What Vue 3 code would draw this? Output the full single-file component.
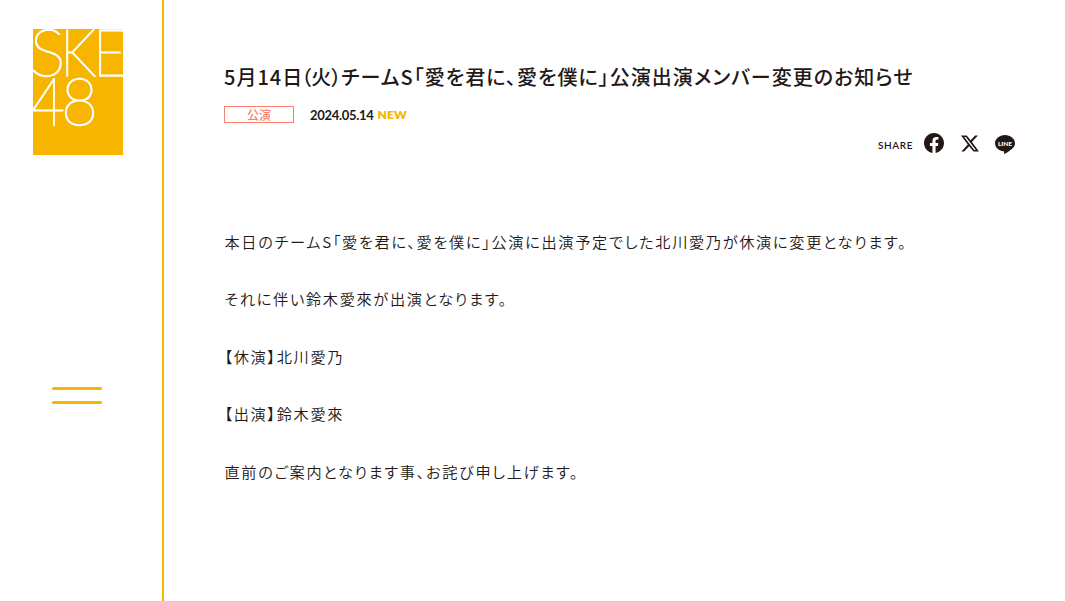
<script setup>
import { ref } from 'vue'

const menuOpen = ref(false)

const news = {
  day: '5月14日',
  weekday: '（火）',
  title: 'チームS「愛を君に、愛を僕に」公演出演メンバー変更のお知らせ',
  category: '公演',
  date: '2024.05.14',
  isNew: true,
  body: [
    '本日のチームS「愛を君に、愛を僕に」公演に出演予定でした北川愛乃が休演に変更となります。',
    'それに伴い鈴木愛來が出演となります。',
    '【休演】北川愛乃',
    '【出演】鈴木愛來',
    '直前のご案内となります事、お詫び申し上げます。',
  ],
}
</script>

<template>
  <div class="page">
    <header class="side">
      <a class="logo" aria-label="SKE48">
        <svg width="90" height="126" viewBox="0 0 90 126">
          <rect width="90" height="126" fill="#f8b500" />
          <g class="logo-text">
            <text x="-3.500" y="47" textLength="36" lengthAdjust="spacingAndGlyphs">S</text>
            <text x="27" y="47" textLength="36" lengthAdjust="spacingAndGlyphs">K</text>
            <text x="60" y="47" textLength="34" lengthAdjust="spacingAndGlyphs">E</text>
            <text x="-2" y="96" textLength="34" lengthAdjust="spacingAndGlyphs">4</text>
            <text x="28" y="96" textLength="37" lengthAdjust="spacingAndGlyphs">8</text>
          </g>
        </svg>
      </a>
      <button class="menu" :aria-expanded="menuOpen" @click="menuOpen = !menuOpen">
        <span></span>
        <span></span>
      </button>
    </header>
    <main class="content">
      <h1>{{ news.day }}<span class="weekday">{{ news.weekday }}</span>{{ news.title }}</h1>
      <div class="meta">
        <span class="category">{{ news.category }}</span>
        <time>{{ news.date }}</time>
        <span v-if="news.isNew" class="new">NEW</span>
      </div>
      <div class="share">
        <span class="share-label">SHARE</span>
        <svg class="facebook" width="20" height="20" viewBox="0 0 24 24">
          <path fill="#231815" d="M24 12.07C24 5.41 18.63 0 12 0S0 5.41 0 12.07C0 18.1 4.39 23.1 10.13 24v-8.44H7.08v-3.49h3.05V9.41c0-3.02 1.79-4.7 4.53-4.7 1.32 0 2.69.24 2.69.24v2.97h-1.52c-1.49 0-1.95.93-1.95 1.88v2.27h3.32l-.53 3.49h-2.79V24C19.61 23.1 24 18.1 24 12.07z" />
        </svg>
        <svg class="x" width="18" height="17" viewBox="0 0 24 24" preserveAspectRatio="none">
          <path fill="#231815" d="M18.9 0.600h3.700l-8.050 9.200L24 23.300h-7.400l-5.800-7.580-6.640 7.580H0.480l8.600-9.830L0 .6h7.590l5.240 6.930zM17.610 21.100h2.040L6.490 2.700H4.300z" />
        </svg>
        <svg class="line" width="20" height="19" viewBox="0 0 20 19">
          <path fill="#231815" d="M10 0C4.500 0 0 3.700 0 8.200c0 4 3.500 7.400 8.300 8.100 1 .2.900.6.700 1.900-.1.600.3.900 1 .6 1.700-.8 6.200-3.700 8.300-6.200 1.100-1.300 1.700-2.700 1.700-4.400C20 3.700 15.500 0 10 0z" />
          <text x="3" y="10.500" textLength="14" lengthAdjust="spacingAndGlyphs">LINE</text>
        </svg>
      </div>
      <div class="body">
        <p v-for="line in news.body" :key="line">{{ line }}</p>
      </div>
    </main>
  </div>
</template>

<style>
body {
  margin: 0;
  background: #fff;
}
</style>

<style scoped>
* {
  box-sizing: border-box;
}
.page {
  display: flex;
  height: 601px;
  overflow: hidden;
  color: #231815;
  font-family: "Noto Sans CJK JP", sans-serif;
  font-feature-settings: "palt";
}
.side {
  display: flex;
  flex-direction: column;
  flex: none;
  width: 164px;
  padding: 29px 0 0 33px;
  border-right: 2px solid #f8b500;
}
.logo {
  width: 90px;
  height: 126px;
}
.logo svg {
  display: block;
}
.logo-text {
  fill: #fff;
  stroke: #fff;
  stroke-width: 1.3px;
  font-family: Lato, sans-serif;
  font-size: 66px;
  font-weight: 200;
}
.menu {
  display: flex;
  flex-direction: column;
  gap: 11px;
  width: 50px;
  margin: 232px 0 0 19px;
  padding: 0;
  border: 0;
  background: none;
  cursor: pointer;
}
.menu span {
  width: 50px;
  height: 3px;
  border-radius: 2px;
  background: #f8b500;
}
.content {
  flex: 1;
  padding: 62px 50px 0 60px;
}
h1 {
  margin: 0;
  font-size: 20px;
  font-weight: 500;
  line-height: 30px;
  letter-spacing: 1.020px;
  white-space: nowrap;
}
.weekday {
  margin-left: -2px;
  letter-spacing: 0;
}
.meta {
  display: flex;
  align-items: center;
  height: 17px;
  margin-top: 14px;
  font-family: Lato, sans-serif;
  font-size: 13px;
  font-weight: 700;
}
.meta time {
  letter-spacing: -0.3px;
}
.category {
  width: 70px;
  height: 17px;
  margin-right: 16px;
  border: 1px solid #fa8072;
  color: #fa8072;
  font-family: "Noto Sans CJK JP", sans-serif;
  font-size: 12px;
  font-weight: 500;
  line-height: 15px;
  text-align: center;
}
.new {
  margin-left: 4px;
  color: #f8b500;
  font-size: 12px;
  font-weight: 800;
  letter-spacing: 0.2px;
}
.share {
  display: flex;
  align-items: center;
  justify-content: flex-end;
  height: 20px;
  margin-top: 10px;
}
.share-label {
  margin-right: 11px;
  padding-top: 3px;
  font-family: Lato, sans-serif;
  font-size: 10px;
  font-weight: 600;
  letter-spacing: 0.6px;
}
.x {
  margin: 0 16px 0 17px;
}
.line {
  margin-top: 2px;
}
.line text {
  fill: #fff;
  font-family: Lato, sans-serif;
  font-size: 6px;
  font-weight: 900;
}
.body {
  margin-top: 74px;
  padding-left: 0.5px;
  font-size: 15.200px;
  font-weight: 350;
  letter-spacing: 1.670px;
}
.body p {
  margin: 0 0 28.700px;
  line-height: 28.700px;
  white-space: nowrap;
}
</style>
